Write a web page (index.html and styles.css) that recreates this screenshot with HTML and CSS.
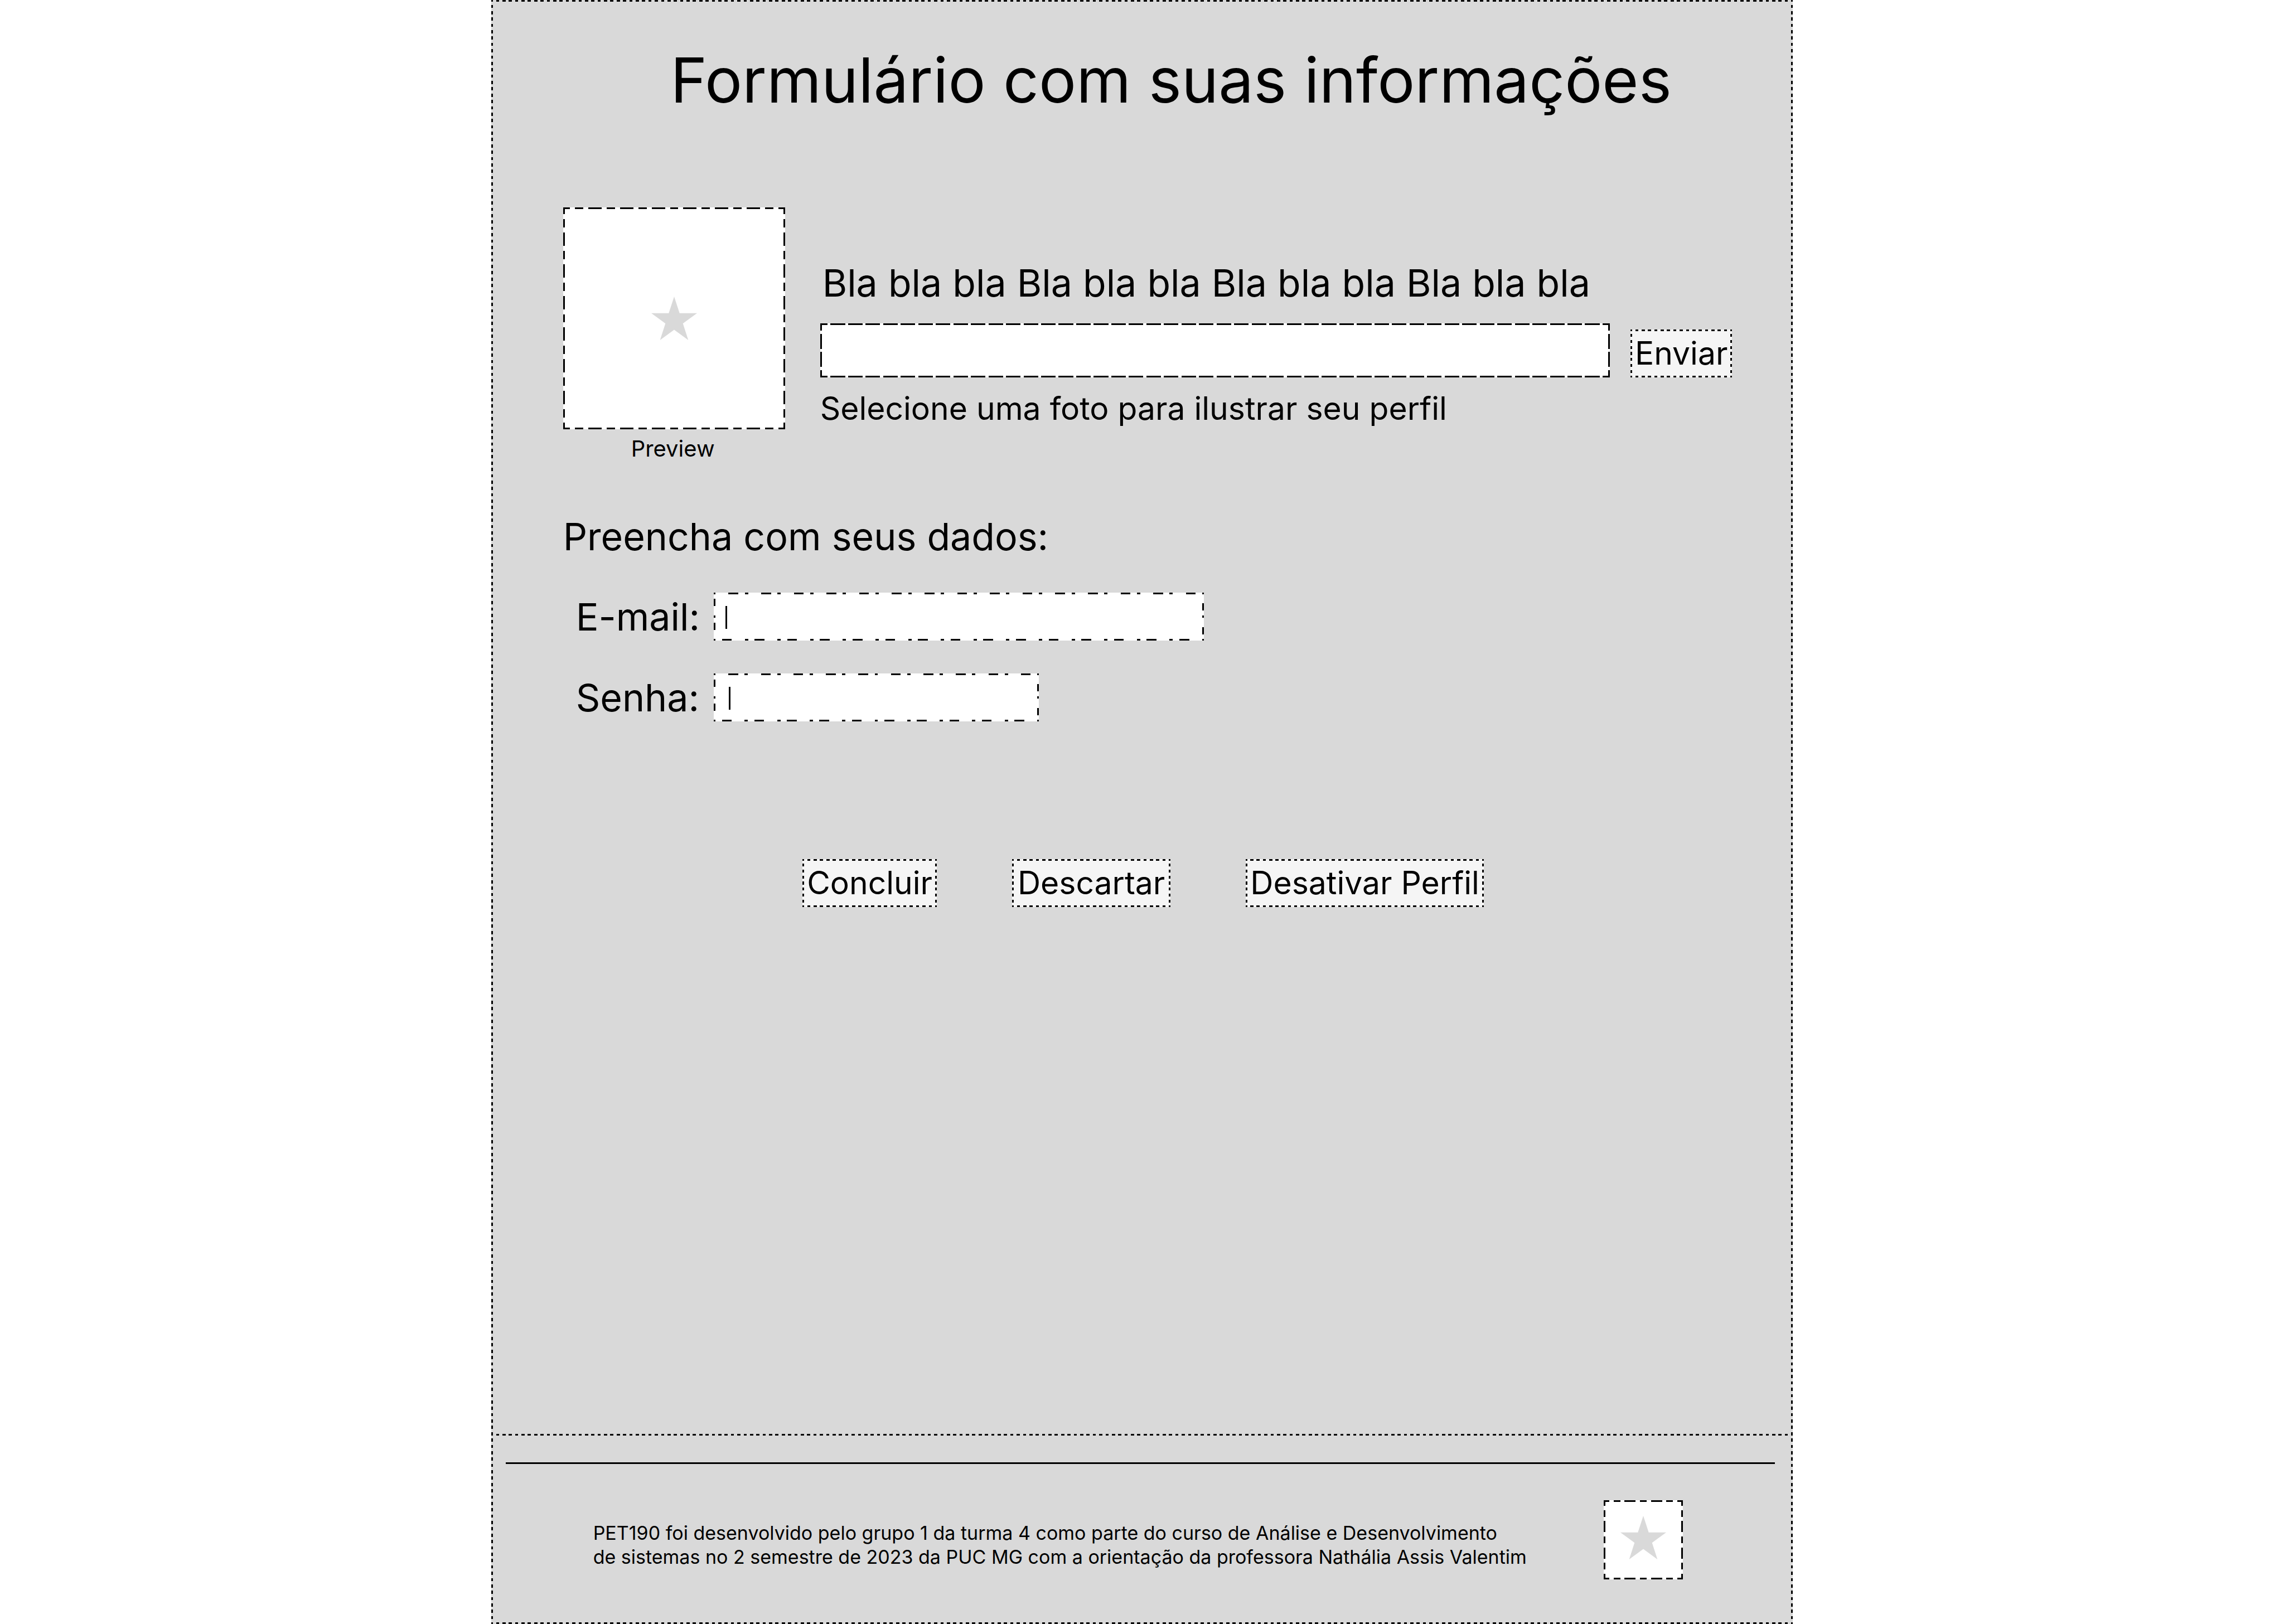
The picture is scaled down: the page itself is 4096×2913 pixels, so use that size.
FILE: index.html
```html
<!DOCTYPE html>
<html lang="pt-BR">
<head>
<meta charset="utf-8">
<meta name="viewport" content="width=device-width, initial-scale=1">
<title>Formulário com suas informações</title>
<link rel="stylesheet" href="styles.css">
</head>
<body>
<div class="page dotted">
  <main class="content">
    <h1 class="title">Formulário com suas informações</h1>

    <form>
      <section class="photo">
        <figure class="preview">
          <div class="picture picture-large">
            <svg class="star" viewBox="0 0 82 78" aria-hidden="true"><path d="M41 0L50.7 29.8H82L56.7 48.2L66.3 78L41 59.6L15.7 78L25.3 48.2L0 29.8H31.3Z"/></svg>
          </div>
          <figcaption class="caption">Preview</figcaption>
        </figure>
        <div class="upload">
          <label class="lead upload-label" for="foto">Bla bla bla Bla bla bla Bla bla bla Bla bla bla</label>
          <div class="upload-row">
            <input class="upload-input" id="foto" type="text" aria-describedby="foto-ajuda">
            <button class="button dotted button-enviar" type="button">Enviar</button>
          </div>
          <p class="hint" id="foto-ajuda">Selecione uma foto para ilustrar seu perfil</p>
        </div>
      </section>

      <section class="data">
        <h2 class="lead">Preencha com seus dados:</h2>
        <div class="fields">
          <label class="lead" for="email">E-mail:</label>
          <input class="field field-email" id="email" type="email">
          <label class="lead" for="senha">Senha:</label>
          <input class="field field-senha" id="senha" type="password">
        </div>
      </section>

      <div class="actions">
        <button class="button dotted button-concluir" type="submit">Concluir</button>
        <button class="button dotted button-descartar" type="reset">Descartar</button>
        <button class="button dotted button-desativar" type="button">Desativar Perfil</button>
      </div>
    </form>
  </main>

  <footer class="footer">
    <hr class="rule">
    <div class="footer-row">
      <p class="credits">PET190 foi desenvolvido pelo grupo 1 da turma 4 como parte do curso de Análise e Desenvolvimento<br>de sistemas no 2 semestre de 2023 da PUC MG com a orientação da professora Nathália Assis Valentim</p>
      <div class="picture picture-small">
        <svg class="star" viewBox="0 0 82 78" aria-hidden="true"><path d="M41 0L50.7 29.8H82L56.7 48.2L66.3 78L41 59.6L15.7 78L25.3 48.2L0 29.8H31.3Z"/></svg>
      </div>
    </div>
  </footer>
</div>
</body>
</html>
```

FILE: styles.css
```css
* {
  box-sizing: border-box;
}

body,
h1,
h2,
p,
figure {
  margin: 0;
  font-weight: 400;
}

body {
  background: #fff;
  color: #000;
  font-family: Inter, "Liberation Sans", sans-serif;
}

input,
button {
  border: 0;
  border-radius: 0;
  outline: 0;
  color: inherit;
  font: inherit;
  appearance: none;
}

/* Dashed outlines: --nx and --ny are the number of pattern repeats
   along the horizontal and vertical edges. */
.dotted {
  --x: calc(100% / var(--nx));
  --y: calc(100% / var(--ny));
  --h: repeating-linear-gradient(to right, #000 0 calc(var(--x) * 0.25), transparent 0 calc(var(--x) * 0.75), #000 0 var(--x));
  --v: repeating-linear-gradient(to bottom, #000 0 calc(var(--y) * 0.25), transparent 0 calc(var(--y) * 0.75), #000 0 var(--y));
  background:
    var(--h) top / 100% 3px no-repeat,
    var(--h) bottom / 100% 3px no-repeat,
    var(--v) left / 3px 100% no-repeat,
    var(--v) right / 3px 100% no-repeat,
    var(--fill);
}

.page {
  --nx: 205;
  --ny: 256;
  --fill: #d9d9d9;
  display: flex;
  flex-direction: column;
  width: 57%;
  min-height: 100vh;
  margin: 0 auto;
}

.content {
  flex: 1;
  padding: 73px 109px 0;
}

.title {
  padding-left: 104px;
  font-size: 112px;
  line-height: 140px;
  text-align: center;
}

.lead {
  font-size: 68px;
  line-height: 84px;
}

.photo {
  display: flex;
  gap: 63px;
  margin-top: 159px;
  padding-left: 20px;
}

.picture {
  --x: calc(100% / var(--nx));
  --h: repeating-linear-gradient(to right, #000 0 calc(var(--x) * 0.21), transparent 0 calc(var(--x) * 0.37), #000 0 calc(var(--x) * 0.63), transparent 0 calc(var(--x) * 0.79), #000 0 var(--x));
  --v: repeating-linear-gradient(to bottom, #000 0 calc(var(--x) * 0.21), transparent 0 calc(var(--x) * 0.37), #000 0 calc(var(--x) * 0.63), transparent 0 calc(var(--x) * 0.79), #000 0 var(--x));
  display: flex;
  align-items: center;
  justify-content: center;
  background:
    var(--h) top / 100% 3px no-repeat,
    var(--h) bottom / 100% 3px no-repeat,
    var(--v) left / 3px 100% no-repeat,
    var(--v) right / 3px 100% no-repeat,
    #fff;
}

.picture-large {
  --nx: 7;
  width: 398px;
  height: 398px;
}

.picture-small {
  --nx: 3;
  width: 142px;
  height: 142px;
  padding-bottom: 8px;
}

.star {
  width: 82px;
  height: 78px;
  fill: #d9d9d9;
}

.caption {
  margin-top: 11px;
  padding-right: 4px;
  font-size: 40px;
  line-height: 48px;
  text-align: center;
}

.upload {
  display: flex;
  flex: 1;
  flex-direction: column;
  padding-top: 93px;
}

.upload-label {
  padding-left: 4px;
}

.upload-row {
  display: flex;
  align-items: flex-end;
  gap: 37px;
  margin: 31px 0 20px;
}

.upload-input {
  --x: calc(100% / 45);
  --y: calc(100% / 3);
  --h: repeating-linear-gradient(to right, #000 0 calc(var(--x) * 0.415), transparent 0 calc(var(--x) * 0.585), #000 0 var(--x));
  --v: repeating-linear-gradient(to bottom, #000 0 calc(var(--y) * 0.41), transparent 0 calc(var(--y) * 0.59), #000 0 var(--y));
  flex: 1;
  min-width: 0;
  height: 97px;
  padding: 0 20px;
  background:
    var(--h) top / 100% 3px no-repeat,
    var(--h) bottom / 100% 3px no-repeat,
    var(--v) left / 3px 100% no-repeat,
    var(--v) right / 3px 100% no-repeat,
    #fff;
  font-size: 57px;
}

.hint {
  font-size: 57px;
  line-height: 72px;
}

.button {
  --ny: 8;
  --fill: #f5f5f5;
  height: 86px;
  padding: 0 8px;
  font-size: 57px;
  line-height: 72px;
  white-space: nowrap;
}

.button-enviar {
  --nx: 16;
}

.button-concluir {
  --nx: 21;
}

.button-descartar {
  --nx: 25;
  padding: 0 10px;
}

.button-desativar {
  --nx: 38;
}

.data {
  margin-top: 91px;
  padding-left: 20px;
}

.fields {
  display: grid;
  grid-template-columns: 225px 1fr;
  gap: 59px 22px;
  align-items: center;
  margin-top: 59px;
  padding-left: 23px;
}

/* Dash-dot outline; the first layer is the text cursor bar. */
.field {
  --x: calc(100% / var(--nx));
  --top: repeating-linear-gradient(to right, #000 0 calc(var(--x) * 0.05), transparent 0 calc(var(--x) * 0.45), #000 0 calc(var(--x) * 0.75), transparent 0 calc(var(--x) * 0.95), #000 0 var(--x));
  --bottom: repeating-linear-gradient(to right, #000 0 calc(var(--x) * 0.05), transparent 0 calc(var(--x) * 0.25), #000 0 calc(var(--x) * 0.55), transparent 0 calc(var(--x) * 0.95), #000 0 var(--x));
  --left: repeating-linear-gradient(to bottom, #000 0 2.5%, transparent 0 12.5%, #000 0 27.5%, transparent 0 47.5%, #000 0 50%);
  --right: repeating-linear-gradient(to bottom, #000 0 2.5%, transparent 0 22.5%, #000 0 37.5%, transparent 0 47.5%, #000 0 50%);
  height: 86px;
  padding: 0 20px;
  background:
    linear-gradient(#000, #000) var(--cursor) 24px / 3px 41px no-repeat,
    var(--top) top / 100% 3px no-repeat,
    var(--bottom) bottom / 100% 3px no-repeat,
    var(--left) left / 3px 100% no-repeat,
    var(--right) right / 3px 100% no-repeat,
    #fff;
  font-size: 57px;
}

.field-email {
  --nx: 15;
  --cursor: 21px;
  width: 879px;
}

.field-senha {
  --nx: 10;
  --cursor: 27px;
  width: 583px;
}

.actions {
  display: flex;
  justify-content: center;
  gap: 135px;
  margin-top: 247px;
  padding-left: 4px;
}

.footer {
  --h: repeating-linear-gradient(to right, #000 0 calc(25% / 205), transparent 0 calc(75% / 205), #000 0 calc(100% / 205));
  padding-top: 51px;
  background: var(--h) top / 100% 3px no-repeat;
}

.rule {
  height: 3px;
  margin: 0 32px 0 26px;
  border: 0;
  background: #000;
}

.footer-row {
  display: flex;
  align-items: flex-start;
  justify-content: space-between;
  padding: 65px 197px 80px 183px;
}

.credits {
  padding-top: 37px;
  font-size: 34px;
  line-height: 43px;
}
```
